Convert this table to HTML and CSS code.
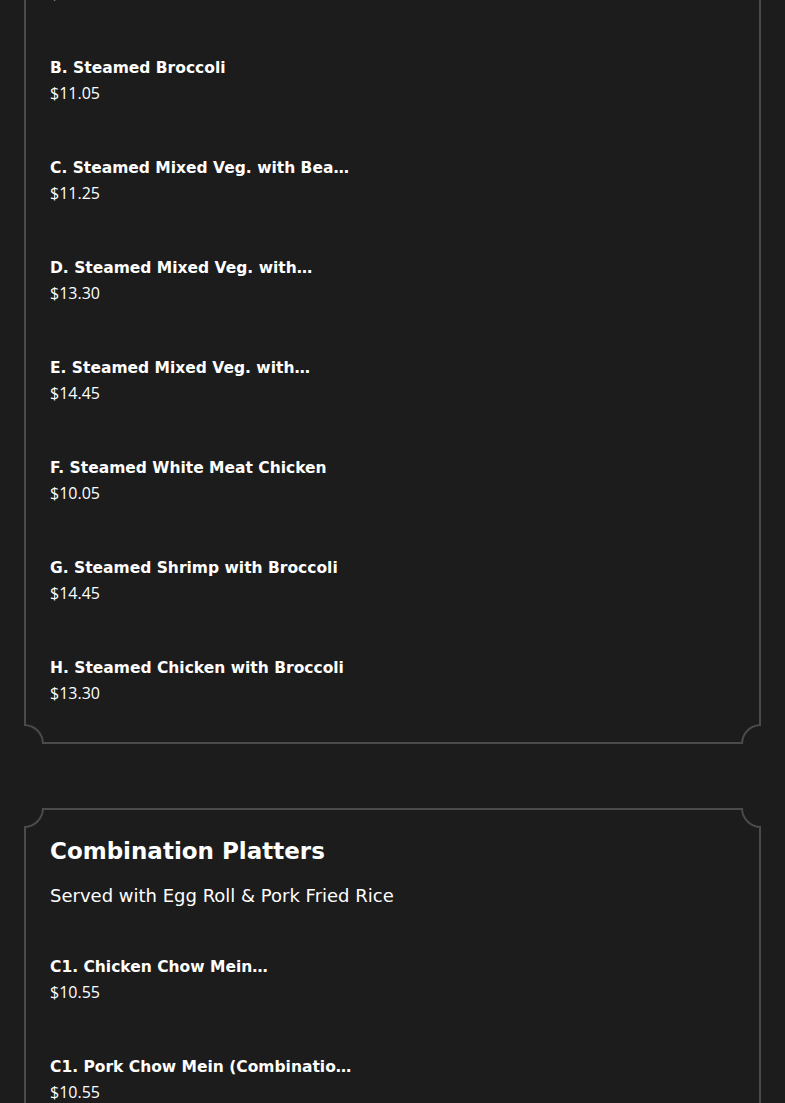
FILE: index.html
```html
<!DOCTYPE html>
<html lang="en">
<head>
<meta charset="utf-8">
<title>Menu</title>
<link rel="stylesheet" href="styles.css">
</head>
<body>
<main class="page">
  <section class="card card-first">
    <span class="corner corner-tl"></span>
    <span class="corner corner-tr"></span>
    <span class="corner corner-bl"></span>
    <span class="corner corner-br"></span>
    <ul class="items">
      <li class="item"><div class="item-name">A. Steamed Mixed Vegetables</div><div class="item-price">$10.05</div></li>
      <li class="item"><div class="item-name">B. Steamed Broccoli</div><div class="item-price">$11.05</div></li>
      <li class="item"><div class="item-name">C. Steamed Mixed Veg. with Bea…</div><div class="item-price">$11.25</div></li>
      <li class="item"><div class="item-name">D. Steamed Mixed Veg. with…</div><div class="item-price">$13.30</div></li>
      <li class="item"><div class="item-name">E. Steamed Mixed Veg. with…</div><div class="item-price">$14.45</div></li>
      <li class="item"><div class="item-name">F. Steamed White Meat Chicken</div><div class="item-price">$10.05</div></li>
      <li class="item"><div class="item-name">G. Steamed Shrimp with Broccoli</div><div class="item-price">$14.45</div></li>
      <li class="item"><div class="item-name">H. Steamed Chicken with Broccoli</div><div class="item-price">$13.30</div></li>
    </ul>
  </section>

  <section class="card">
    <span class="corner corner-tl"></span>
    <span class="corner corner-tr"></span>
    <span class="corner corner-bl"></span>
    <span class="corner corner-br"></span>
    <h2 class="card-title">Combination Platters</h2>
    <p class="card-sub">Served with Egg Roll &amp; Pork Fried Rice</p>
    <ul class="items">
      <li class="item"><div class="item-name">C1. Chicken Chow Mein…</div><div class="item-price">$10.55</div></li>
      <li class="item"><div class="item-name">C1. Pork Chow Mein (Combinatio…</div><div class="item-price">$10.55</div></li>
    </ul>
  </section>
</main>
</body>
</html>
```

FILE: styles.css
```css
* { box-sizing: border-box; }
html, body { margin: 0; padding: 0; }
body {
  background: #1c1c1c;
  color: #ffffff;
  font-family: "DejaVu Sans", "Open Sans", sans-serif;
  width: 785px;
  height: 1103px;
  overflow: hidden;
}
.page {
  padding: 0 24px;
  display: flex;
  flex-direction: column;
  gap: 64px;
}
.card {
  position: relative;
  border: 2px solid #4b4b4b;
  padding: 26px 24px 37px;
}
.card-first {
  margin-top: -73px;
}
.corner {
  position: absolute;
  width: 20px;
  height: 20px;
  background: #1c1c1c;
  border: 0 solid #4b4b4b;
}
.corner-tl { left: -2px; top: -2px; border-bottom-right-radius: 20px; border-right-width: 2px; border-bottom-width: 2px; }
.corner-tr { right: -2px; top: -2px; border-bottom-left-radius: 20px; border-left-width: 2px; border-bottom-width: 2px; }
.corner-bl { left: -2px; bottom: -2px; border-top-right-radius: 20px; border-right-width: 2px; border-top-width: 2px; }
.corner-br { right: -2px; bottom: -2px; border-top-left-radius: 20px; border-left-width: 2px; border-top-width: 2px; }
.card-title {
  margin: 0;
  font-size: 23px;
  font-weight: 600;
  line-height: 30px;
}
.card-sub {
  margin: 17px 0 0;
  font-size: 18px;
  font-weight: 400;
  line-height: 26px;
}
.items {
  list-style: none;
  margin: 0;
  padding: 0;
  display: flex;
  flex-direction: column;
  gap: 50px;
}
.card-sub + .items { margin-top: 45px; }
.item-name {
  font-size: 15.5px;
  font-weight: 600;
  line-height: 26px;
  white-space: nowrap;
  overflow: hidden;
  max-width: 320px;
}
.item-price {
  font-family: "Open Sans", "DejaVu Sans", sans-serif;
  font-size: 16px;
  font-weight: 400;
  line-height: 24px;
}
```
